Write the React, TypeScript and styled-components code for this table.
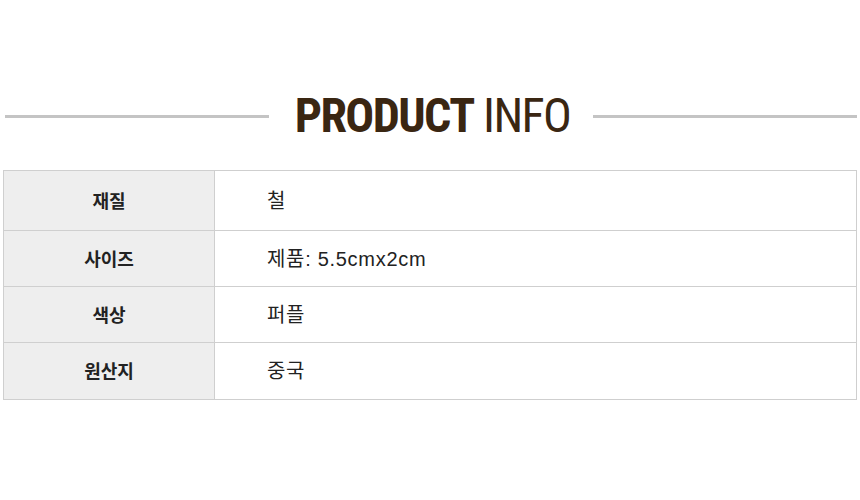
import React from "react";
import styled, { createGlobalStyle } from "styled-components";

const Global = createGlobalStyle`
  html, body { margin: 0; padding: 0; background: #fff; }
  body { font-family: "Liberation Sans", "Noto Sans CJK KR", sans-serif; }
`;

const Page = styled.div`
  width: 860px;
  height: 500px;
  padding-top: 92px;
  box-sizing: border-box;
`;

const TitleRow = styled.div`
  display: flex;
  align-items: center;
  padding: 0 3px 0 5px;
  height: 48px;
`;

const Line = styled.div`
  flex: 1;
  height: 3px;
  background: #c4c4c4;
`;

const Title = styled.h2`
  margin: 0 23px 0 26px;
  font-family: "Liberation Sans Narrow", "Roboto Condensed", "Liberation Sans", sans-serif;
  font-size: 48px;
  font-weight: 400;
  line-height: 48px;
  color: #3a2612;
  white-space: nowrap;
  letter-spacing: -1.6px;
  b { font-weight: 700; }
`;

const Table = styled.div`
  margin: 30px 3px 0 3px;
  border-top: 1px solid #cfcfcf;
  border-left: 1px solid #cfcfcf;
  border-right: 1px solid #cfcfcf;
`;

const Row = styled.div<{ $h: number }>`
  display: grid;
  grid-template-columns: 211px 1fr;
  height: ${(p) => p.$h}px;
  border-bottom: 1px solid #cfcfcf;
  box-sizing: border-box;
`;

const Label = styled.div`
  background: #eeeeee;
  border-right: 1px solid #cfcfcf;
  display: flex;
  align-items: center;
  justify-content: center;
  padding-bottom: 2px;
  font-family: "Noto Sans CJK KR", sans-serif;
  font-weight: 700;
  font-size: 18px;
  color: #222;
`;

const Value = styled.div`
  display: flex;
  align-items: center;
  padding-left: 52px;
  padding-bottom: 3px;
  font-family: "Liberation Sans", "Noto Sans CJK KR", sans-serif;
  font-size: 20px;
  letter-spacing: 0.7px;
  color: #222;
`;

const rows = [
  { label: "재질", value: "철", h: 60 },
  { label: "사이즈", value: "제품: 5.5cmx2cm", h: 56 },
  { label: "색상", value: "퍼플", h: 56 },
  { label: "원산지", value: "중국", h: 57 },
];

export default function App() {
  return (
    <Page>
      <Global />
      <TitleRow>
        <Line />
        <Title>
          <b>PRODUCT</b> INFO
        </Title>
        <Line />
      </TitleRow>
      <Table>
        {rows.map((r) => (
          <Row key={r.label} $h={r.h}>
            <Label>{r.label}</Label>
            <Value>{r.value}</Value>
          </Row>
        ))}
      </Table>
    </Page>
  );
}
